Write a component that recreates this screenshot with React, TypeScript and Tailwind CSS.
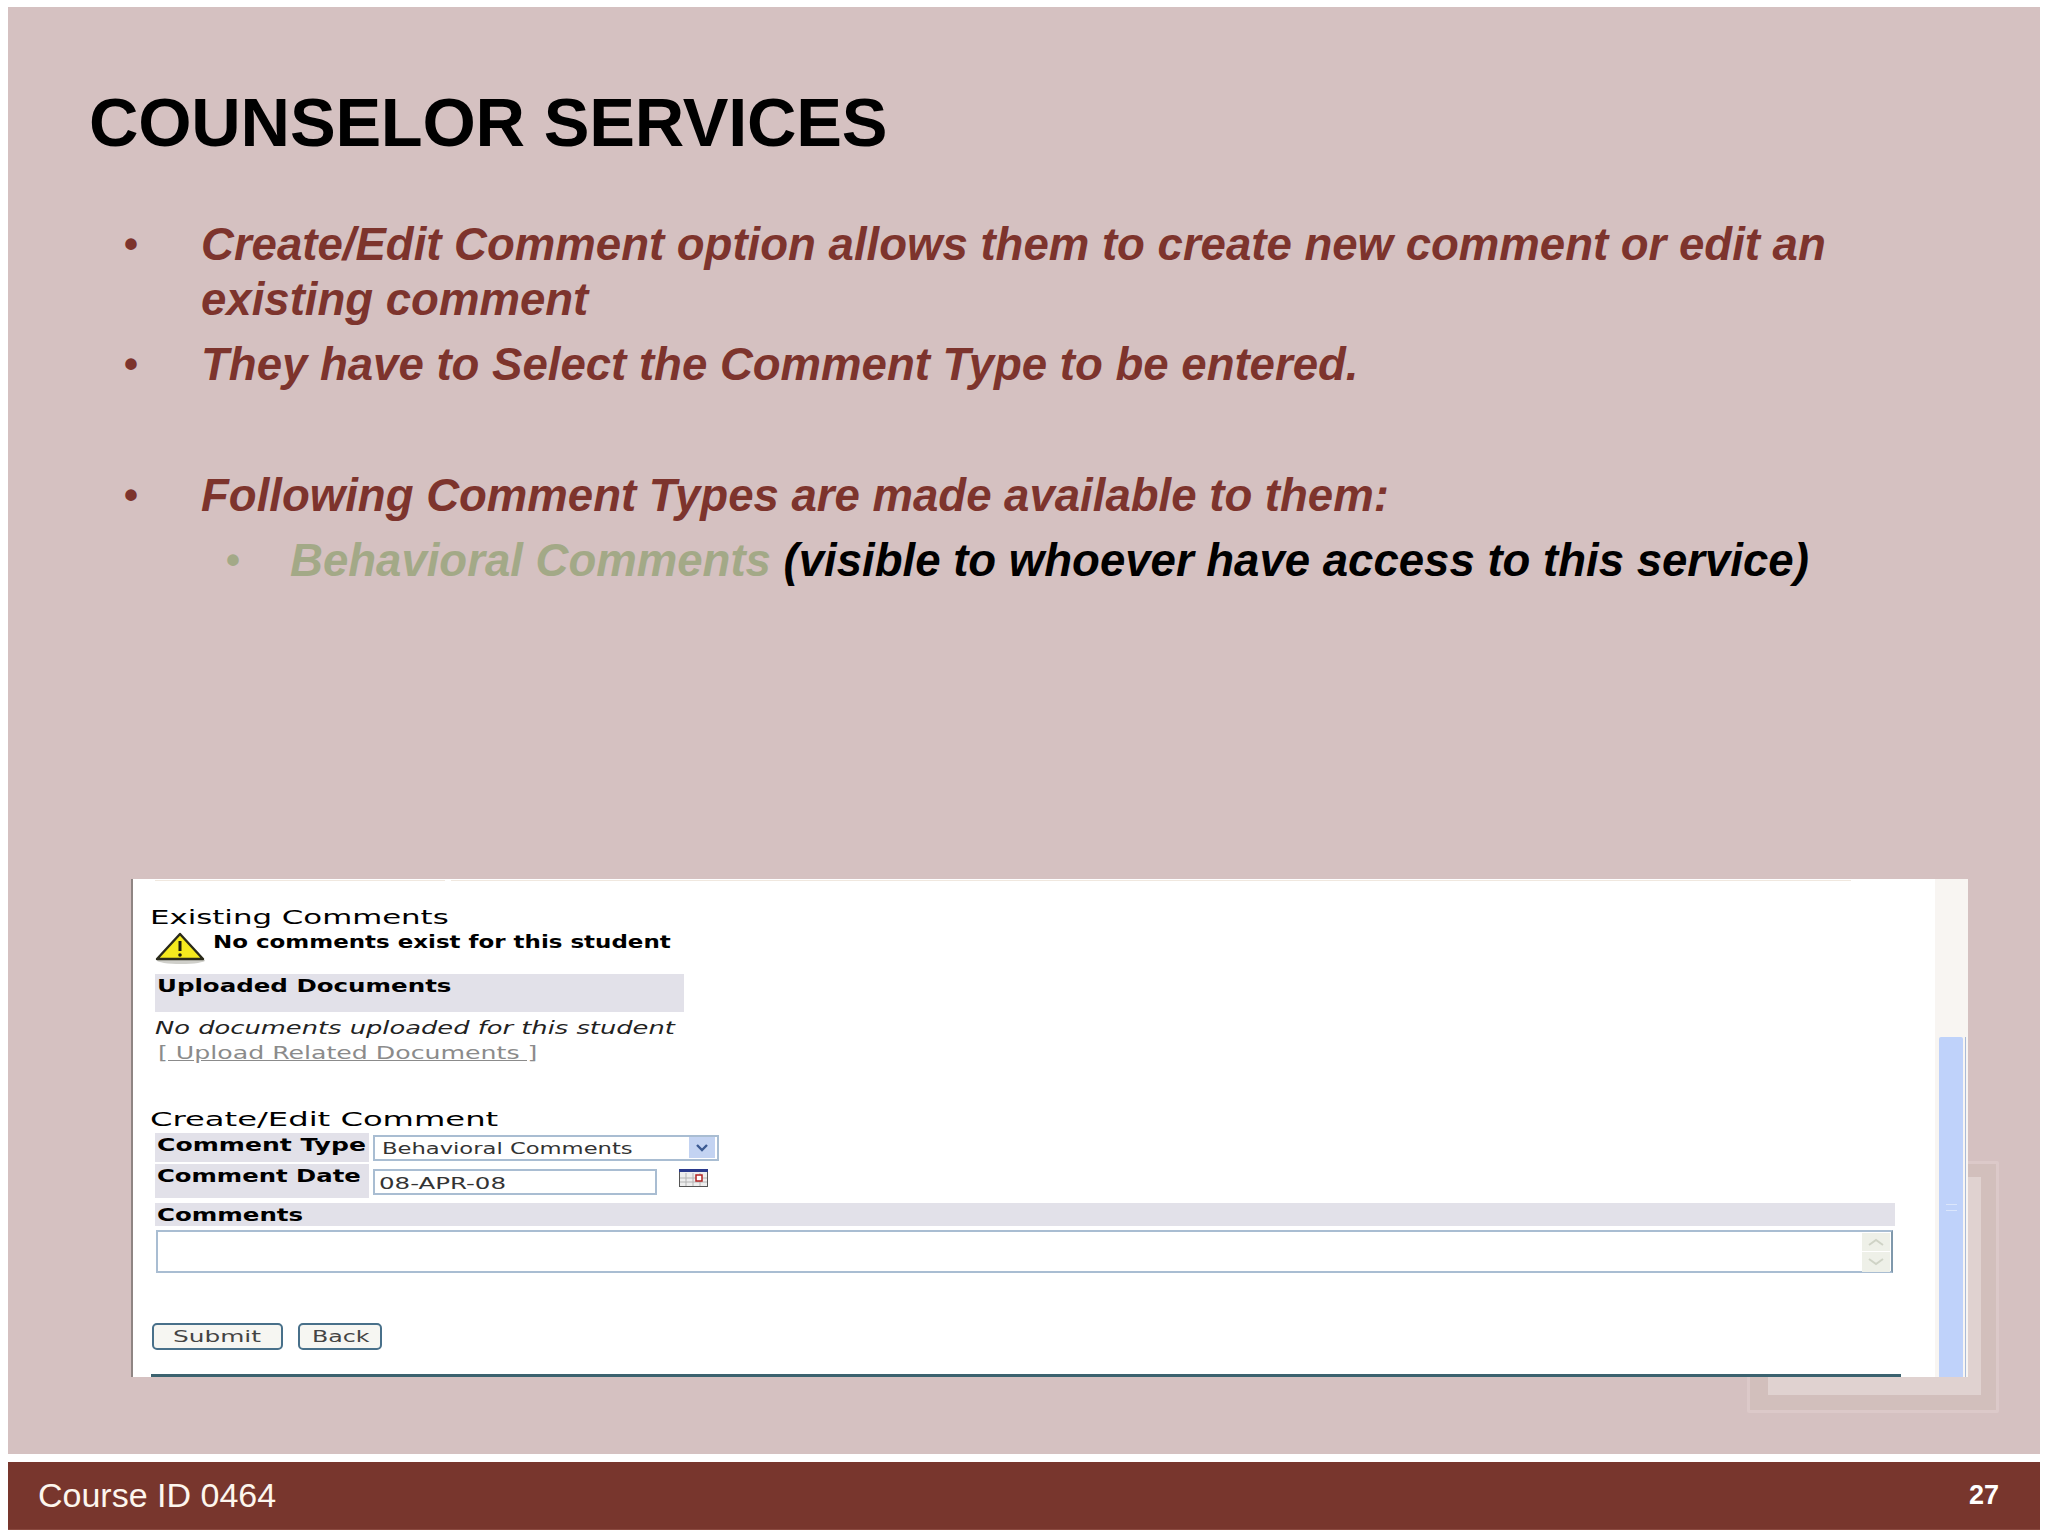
const sans = "font-['Liberation_Sans',Arial,sans-serif]";
const web = "font-['DejaVu_Sans',Verdana,sans-serif]";

function Bullet({ children, cls }: { children: React.ReactNode; cls: string }) {
  return (
    <li className={`flex ${cls}`}>
      {children}
    </li>
  );
}

function Warning() {
  return (
    <svg viewBox="0 0 50 32" className="w-[50px] h-[32px] shrink-0">
      <ellipse cx="26" cy="28.5" rx="24" ry="3.5" fill="#cfcfca" />
      <path d="M25 2 L48 27 L2 27 Z" fill="#f5ea1e" stroke="#2a2a1a" strokeWidth="2.4" strokeLinejoin="round" />
      <path d="M25 9 L25 19" stroke="#1a1a10" strokeWidth="3" />
      <circle cx="25" cy="23" r="1.8" fill="#1a1a10" />
    </svg>
  );
}

function Calendar() {
  return (
    <svg viewBox="0 0 29 18" className="w-[29px] h-[18px]">
      <rect x="0.5" y="0.5" width="28" height="17" fill="#eeeeee" stroke="#555" />
      <rect x="0" y="0" width="29" height="3" fill="#2a3a8c" />
      <path d="M7 4V17M14 4V17M21 4V17M1 9H28M1 13H28" stroke="#b4b4b4" strokeWidth="1" />
      <rect x="17" y="6" width="6" height="6" fill="#fff" stroke="#b02020" strokeWidth="1.5" />
    </svg>
  );
}

function T({ children, cls }: { children: React.ReactNode; cls: string }) {
  return <span className={`inline-block origin-left whitespace-nowrap ${web} ${cls}`}>{children}</span>;
}

export default function App() {
  return (
    <div className={`relative w-[2048px] h-[1536px] bg-white pt-[7px] px-[8px] flex flex-col ${sans}`}>
      <div className="relative h-[1447px] bg-[#d5c1c1] flex flex-col">
        {/* decorative frames behind the picture */}
        <div className="absolute left-[1739px] top-[1154px] w-[252px] h-[252px] border-[3px] border-[#dcc9c9] bg-[#d2bfbc] rounded-[2px]" />
        <div className="absolute left-[1760px] top-[1170px] w-[213px] h-[218px] bg-[#e0d2d0]" />

        <h1 className="relative ml-[81px] mt-[77px] text-[68.5px] leading-[78px] font-bold text-black whitespace-nowrap tracking-[-0.2px]">
          COUNSELOR SERVICES
        </h1>

        <ul className="relative mt-[55px] ml-[116px] italic font-bold text-[#7d342d] text-[45.55px]">
          <Bullet cls="leading-[55px]">
            <span className="w-[77px] shrink-0 not-italic text-[40px]">•</span>
            <span className="w-[1700px]">
              Create/Edit Comment option allows them to create new comment or edit an
              <br />
              existing comment
            </span>
          </Bullet>
          <Bullet cls="leading-[55px] mt-[10px]">
            <span className="w-[77px] shrink-0 not-italic text-[40px]">•</span>
            <span>They have to Select the Comment Type to be entered.</span>
          </Bullet>
          <Bullet cls="leading-[55px] mt-[76px]">
            <span className="w-[77px] shrink-0 not-italic text-[40px]">•</span>
            <span>Following Comment Types are made available to them:</span>
          </Bullet>
          <li className="flex leading-[55px] mt-[10px] ml-[102px] whitespace-nowrap">
            <span className="w-[64px] shrink-0 not-italic text-[40px] text-[#a3a987]">•</span>
            <span>
              <span className="text-[#a3a987]">Behavioral Comments</span>{" "}
              <span className="text-black">(visible to whoever have access to this service)</span>
            </span>
          </li>
        </ul>

        <div className="relative mt-auto mb-[77px] ml-[123px] w-[1837px] h-[498px] bg-white border-l-[2px] border-[#8f8583] flex text-black overflow-hidden">
          <div className="absolute left-[22px] top-[1px] w-[290px] h-[1px] bg-[#f0e8df]" />
          <div className="absolute left-[318px] top-[1px] w-[1400px] h-[1px] bg-[#f0e8df]" />

          <div className="flex-1 flex flex-col pl-[18px]">
            <div className="h-[26px] mt-[25px] ml-[-1px] flex items-center">
              <T cls="text-[20px] scale-x-[1.54]">Existing Comments</T>
            </div>
            <div className="flex items-start ml-[4px] h-[37px] mt-[2px]">
              <Warning />
              <T cls="text-[17px] font-bold scale-x-[1.35] ml-[8px] mt-[0px] leading-[20px]">No comments exist for this student</T>
            </div>
            <div className="ml-[4px] w-[529px] h-[38px] mt-[5px] bg-[#e2e1e9] pl-[2px] pt-[1px]">
              <T cls="text-[17.5px] font-bold scale-x-[1.4] leading-[22px]">Uploaded Documents</T>
            </div>
            <div className="ml-[4px] h-[22px] mt-[4px] flex items-center">
              <T cls="text-[18px] italic scale-x-[1.43] text-[#222]">No documents uploaded for this student</T>
            </div>
            <div className="ml-[7px] h-[24px] mt-[2px] flex items-center">
              <T cls="text-[18px] underline scale-x-[1.4] text-[#8b8b8b]">[ Upload Related Documents ]</T>
            </div>
            <div className="h-[26px] mt-[42px] ml-[-1px] flex items-center">
              <T cls="text-[20px] scale-x-[1.61]">Create/Edit Comment</T>
            </div>
            <div className="flex mt-[1px] ml-[4px] h-[29px]">
              <div className="w-[214px] bg-[#e2e1e9] pl-[2px] pt-[1px]">
                <T cls="text-[17px] font-bold scale-x-[1.475] leading-[20px]">Comment Type</T>
              </div>
              <div className="relative ml-[4px] mt-[2px] w-[346px] h-[26px] border-[2px] border-[#a9bdd2] bg-white pl-[7px]">
                <T cls="text-[16px] scale-x-[1.415] text-[#333] leading-[24px]">Behavioral Comments</T>
                <div className="absolute right-[2px] top-[0px] w-[26px] h-[21px] bg-[#c3d3f2] flex items-center justify-center">
                  <svg viewBox="0 0 14 8" className="w-[14px] h-[8px]">
                    <path d="M2 1 L7 6 L12 1" fill="none" stroke="#3b5a92" strokeWidth="2.4" />
                  </svg>
                </div>
              </div>
            </div>
            <div className="flex mt-[2px] ml-[4px] h-[34px]">
              <div className="w-[214px] bg-[#e2e1e9] pl-[2px] pt-[1px]">
                <T cls="text-[17px] font-bold scale-x-[1.43] leading-[20px]">Comment Date</T>
              </div>
              <div className="ml-[4px] mt-[5px] w-[284px] h-[26px] border-[2px] border-[#a9bdd2] bg-white pl-[4px]">
                <T cls="text-[16px] scale-x-[1.53] text-[#333] leading-[26px]">08-APR-08</T>
              </div>
              <div className="ml-[22px] mt-[5px]">
                <Calendar />
              </div>
            </div>
            <div className="mt-[5px] ml-[4px] w-[1740px] h-[23px] bg-[#e2e1e9] pl-[2px]">
              <T cls="text-[17px] font-bold scale-x-[1.44] leading-[24px]">Comments</T>
            </div>
            <div className="relative mt-[4px] ml-[5px] w-[1737px] h-[43px] border-[2px] border-[#a9bdd2] border-r-[#7f98ab] bg-white">
              <div className="absolute right-[1px] top-[1px] w-[28px] flex flex-col">
                <div className="h-[18px] bg-[#eef0e8] flex items-center justify-center">
                  <svg viewBox="0 0 18 8" className="w-[18px] h-[8px]"><path d="M2 7 L9 2 L16 7" fill="none" stroke="#cfd3c6" strokeWidth="2" /></svg>
                </div>
                <div className="h-[20px] mt-[1px] bg-[#eef0e8] flex items-center justify-center">
                  <svg viewBox="0 0 18 8" className="w-[18px] h-[8px]"><path d="M2 1 L9 6 L16 1" fill="none" stroke="#cfd3c6" strokeWidth="2" /></svg>
                </div>
              </div>
            </div>
            <div className="flex mt-[50px] ml-[1px] gap-[15px]">
              <div className="w-[131px] h-[27px] border-[2px] border-[#48708a] rounded-[5px] bg-[#f6f6f2] flex items-center pl-[19px]">
                <T cls="text-[16px] scale-x-[1.55] text-[#444]">Submit</T>
              </div>
              <div className="w-[84px] h-[27px] border-[2px] border-[#48708a] rounded-[5px] bg-[#f6f6f2] flex items-center pl-[12px]">
                <T cls="text-[16px] scale-x-[1.48] text-[#444]">Back</T>
              </div>
            </div>
            <div className="mt-auto w-[1750px] h-[3px] bg-[#3b626f]" />
          </div>

          <div className="relative w-[33px] shrink-0 flex flex-col bg-[#f8f5f2]">
            <div className="h-[158px]" />
            <div className="flex-1 flex">
              <div className="ml-[4px] w-[24px] bg-[#bfd2fa] rounded-t-[2px] flex items-center justify-center">
                <div className="w-[11px] h-[7px] border-y border-[#dbe6fb]" />
              </div>
              <div className="ml-[2px] w-[1px] bg-[#a9bbd8]" />
            </div>
          </div>
        </div>
      </div>

      <div className="mt-[8px] h-[68px] bg-[#78362d] border-b border-[#8a4a40] flex items-center justify-between pl-[30px] pr-[41px] text-white">
        <span className="text-[34px] font-normal text-[#fdf6ee]">Course ID 0464</span>
        <span className="text-[27px] font-bold">27</span>
      </div>
    </div>
  );
}
